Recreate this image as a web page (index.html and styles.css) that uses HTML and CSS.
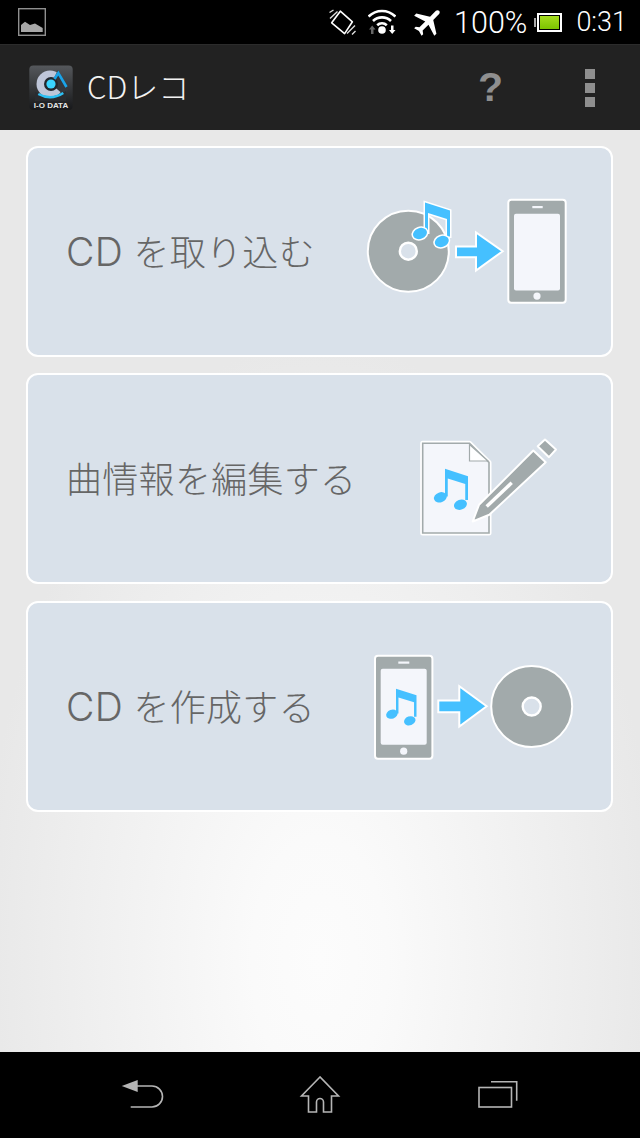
FILE: index.html
```html
<!DOCTYPE html>
<html lang="ja">
<head>
  <meta charset="UTF-8" />
  <meta name="viewport" content="width=device-width, initial-scale=1.0"/>
  <title>CDレコ</title>
  <link rel="stylesheet" href="styles.css">
</head>
<body>
  <div class="statusbar">
    <svg class="st-gallery" width="28" height="28" viewBox="18 8 28 28">
      <rect x="18.7" y="8.7" width="26.6" height="26.6" fill="none" stroke="#8f8f8f" stroke-width="1.4"/>
      <path d="M21 32V25L25 21.7L30 25L35 23.5L42.7 28V32Z" fill="#a8a8a8"/>
    </svg>
    <div class="st-right">
      <svg class="st-vibrate" width="28" height="28" viewBox="326 8 28 28">
        <path d="M338.3 11.2L350.4 21.8L342.6 33.6L329.7 22.8Z" fill="none" stroke="#fff" stroke-width="1.6" stroke-linejoin="round"/>
        <path d="M327.5 12.5L331.5 10M328 18.5L335.5 11.5M345 33.5L353 25.5M350 34.5L353.5 31" fill="none" stroke="#ddd" stroke-width="1.4"/>
      </svg>
      <svg class="st-wifi" width="28" height="28" viewBox="366 8 28 28">
        <path d="M366.6 16.6A19 19 0 0 1 393.4 16.6M371 21A13 13 0 0 1 389 21M375.2 25.2A7 7 0 0 1 384.8 25.2" fill="none" stroke="#fff" stroke-width="2.6"/>
        <circle cx="380" cy="30" r="3.8" fill="#fff"/>
        <path d="M370.2 25.5L373.5 29.5H371.5V34H369V29.5H367Z" fill="#666"/>
        <path d="M389 25.5H391.5V30H393.5L390.2 34L387 30H389Z" fill="#fff"/>
      </svg>
      <svg class="st-plane" width="36" height="36" viewBox="0 0 24 24">
        <path transform="rotate(45 12 12)" d="M21 16v-2l-8-5V3.5c0-.83-.67-1.5-1.5-1.5S10 2.67 10 3.5V9l-8 5v2l8-2.5V19l-2 1.5V22l3.5-1 3.5 1v-1.5L13 19v-5.5l8 2.5z" fill="#fff"/>
      </svg>
      <span class="st-pct">100%</span>
      <div class="st-battery"><div class="st-battery-fill"></div></div>
      <span class="st-time">0:31</span>
    </div>
  </div>

  <div class="actionbar">
    <svg class="app-icon" width="46" height="46" viewBox="0 0 46 46">
      <defs>
        <linearGradient id="iconbg" x1="0" y1="0" x2="0" y2="1">
          <stop offset="0" stop-color="#55585c"/>
          <stop offset="1" stop-color="#17181a"/>
        </linearGradient>
      </defs>
      <rect x="1.3" y="0.4" width="43.4" height="44.6" rx="4" fill="url(#iconbg)"/>
      <circle cx="22" cy="19" r="13.5" fill="#bfc6d9"/>
      <path d="M23 19L30 5L41 24L36 30Z" fill="#34373c"/>
      <path d="M7 27Q23 36 38 26V36H7Z" fill="#2a2c30"/>
      <path d="M10.3 29Q23 36 35.3 28" fill="none" stroke="#2cc0f5" stroke-width="2.4"/>
      <circle cx="23" cy="19" r="7" fill="#23272e"/>
      <circle cx="23" cy="19" r="4.6" fill="#3ad4ff"/>
      <path d="M26.5 14L30.3 8L38.5 22" fill="none" stroke="#1aa3e8" stroke-width="2.6"/>
      <text class="app-icon-text" x="23" y="43">I-O DATA</text>
    </svg>
    <span class="app-title">CDレコ</span>
    <span class="act-help">?</span>
    <div class="act-menu"><i></i><i></i><i></i></div>
  </div>

  <div class="content">
    <div class="card">
      <span class="card-label"><span class="card-latin">CD</span> を取り込む</span>
      <svg class="card-icon" width="220" height="130" viewBox="360 186.5 220 130">
        <defs>
          <g id="note">
            <path d="M0 0L25 8V34H22V16.5L3 10.5V30H0Z"/>
            <ellipse cx="-5" cy="31" rx="7.2" ry="5.4" transform="rotate(-20 -5 31)"/>
            <ellipse cx="16.8" cy="39" rx="7.2" ry="5.4" transform="rotate(-20 16.8 39)"/>
          </g>
        </defs>
        <circle class="disc" cx="408.3" cy="250.7" r="40.5"/>
        <circle class="disc-hole" cx="408.3" cy="250.7" r="8.5"/>
        <use class="note note-line" href="#note" x="425" y="202"/>
        <path class="arrow" d="M456 246H476V232L502.7 250.7L476 270V256.7H456Z"/>
        <rect class="phone" x="508.3" y="199.3" width="57.4" height="103" rx="3"/>
        <rect class="phone-screen" x="514" y="213.3" width="46" height="76.7" rx="2"/>
        <rect class="phone-part" x="532.3" y="205.5" width="10.4" height="2.2"/>
        <circle class="phone-part" cx="537" cy="295.6" r="3.6"/>
      </svg>
    </div>

    <div class="card">
      <span class="card-label">曲情報を編集する</span>
      <svg class="card-icon" width="220" height="130" viewBox="360 413.5 220 130">
        <path class="doc-edge" d="M422.7 442.7H469.5L489 462V532.5H422.7Z"/>
        <path class="doc" d="M422.7 442.7H469.5L489 462V532.5H422.7Z"/>
        <path class="doc-fold" d="M469.5 444V460.5H488Z"/>
        <use class="note" href="#note" transform="translate(445 468.3) scale(.92)"/>
        <path class="pencil" d="M472.7 521L479 504.3L533.3 450L545.7 461.7L489.3 514.3Z"/>
        <path class="pencil" d="M537.7 445.7L545 439L556 449L549 456.7Z"/>
        <path class="pencil-slot" d="M486.7 506L511.7 482.3"/>
      </svg>
    </div>

    <div class="card card-last">
      <span class="card-label"><span class="card-latin">CD</span> を作成する</span>
      <svg class="card-icon" width="220" height="130" viewBox="360 641.5 220 130">
        <rect class="phone" x="375" y="655.3" width="57.4" height="103" rx="3"/>
        <rect class="phone-screen" x="380.7" y="668.3" width="46" height="76" rx="2"/>
        <rect class="phone-part" x="398.3" y="661" width="11" height="2.2"/>
        <circle class="phone-part" cx="403.7" cy="750.7" r="3.6"/>
        <use class="note" href="#note" transform="translate(396 688.3) scale(.82)"/>
        <path class="arrow" d="M438.3 700H459.3V685.7L486.7 705.7L459.3 726V711.7H438.3Z"/>
        <circle class="disc" cx="531.7" cy="706" r="40.5"/>
        <circle class="disc-hole" cx="531.7" cy="706" r="9"/>
      </svg>
    </div>
  </div>

  <div class="navbar">
    <div class="nav-item">
      <svg width="46" height="40" viewBox="120 1080 46 40">
        <path class="nav-line" d="M138 1091H153A10.5 10.5 0 0 1 153 1112H131.7"/>
        <path class="nav-fill" d="M122.7 1091L138.7 1085V1097Z"/>
      </svg>
    </div>
    <div class="nav-item">
      <svg width="46" height="42" viewBox="297 1074 46 42">
        <path class="nav-line" d="M320 1077L301.5 1096H308.5V1112H316.5V1102A3.5 3.5 0 0 1 323.5 1102V1112H331.5V1096H338.5Z"/>
      </svg>
    </div>
    <div class="nav-item">
      <svg width="46" height="40" viewBox="475 1080 46 40">
        <rect class="nav-line" x="479" y="1092.5" width="32.5" height="19.5"/>
        <path class="nav-line" d="M491 1086.7H516.7V1105.7"/>
      </svg>
    </div>
  </div>
</body>
</html>
```

FILE: styles.css
```css
html, body { margin: 0; height: 100%; }
body { width: 640px; height: 1138px; display: flex; flex-direction: column; overflow: hidden; background: #000; font-family: "Roboto", "Noto Sans CJK JP", sans-serif; }
svg { display: block; }

.statusbar { height: 44px; background: #000; display: flex; align-items: center; justify-content: space-between; padding: 0 13px 0 18px; box-sizing: border-box; color: #fff; }
.st-right { display: flex; align-items: center; }
.st-wifi { margin-left: 12px; }
.st-plane { margin-left: 15px; }
.st-pct { margin-left: 7px; font-size: 30.5px; font-weight: 300; }
.st-battery { position: relative; margin-left: 10px; width: 25px; height: 19px; box-sizing: border-box; border: 2px solid #fff; padding: 1px; }
.st-battery::before { content: ""; position: absolute; left: -5px; top: 3px; width: 2px; height: 9px; background: #aaa; }
.st-battery-fill { height: 100%; background: linear-gradient(#a5dc1e, #7cc300); }
.st-time { margin-left: 14px; font-size: 27px; font-weight: 300; }

.actionbar { height: 86px; background: #222; display: flex; align-items: center; padding: 0 45px 0 28px; box-sizing: border-box; color: #f2f2f2; border-top: 1px solid #2c2c2c; }
.app-icon-text { font: bold 8px "Liberation Sans", sans-serif; fill: #e6e6e6; text-anchor: middle; }
.app-title { margin: 0 0 5px 13px; font: 300 31px "Noto Sans CJK JP", sans-serif; }
.act-help { margin-left: auto; font: bold 41px "Liberation Sans", sans-serif; color: #8f8f8f; }
.act-menu { margin-left: 82px; display: flex; flex-direction: column; gap: 4px; }
.act-menu i { display: block; width: 10px; height: 10px; background: #8f8f8f; }

.content { flex: 1; display: flex; flex-direction: column; gap: 16px; padding: 16px 27px 0 26px; background: radial-gradient(ellipse 340px 620px at 50% 830px, #fcfcfc 0, #fafafa 20%, #e8e8e8 100%); }
.card { height: 211px; box-sizing: border-box; display: flex; align-items: center; justify-content: space-between; padding: 0 31px 0 38px; background: #d9e1ea; border: 2px solid #fff; border-radius: 12px; }
.card-last { margin-top: 1px; }
.card-label { margin-bottom: 4px; font-family: "Inter", "Noto Sans CJK JP", sans-serif; font-size: 36px; font-weight: 300; letter-spacing: .3px; color: #666; white-space: nowrap; }
.card-latin { font-size: 39px; }
.card-icon { flex: none; }

.disc { fill: #a2aaab; stroke: #fff; stroke-width: 2; }
.disc-hole { fill: #d9e1ea; stroke: #fff; stroke-width: 2.4; }
.note { fill: #45c0ff; }
.note-line { stroke: #fff; stroke-width: 3; paint-order: stroke; }
.arrow { fill: #45c0ff; stroke: #fff; stroke-width: 2; }
.phone { fill: #a2aaab; stroke: #fff; stroke-width: 2; }
.phone-screen { fill: #f4f6fb; }
.phone-part { fill: #f4f6fb; }
.doc-edge { fill: none; stroke: #fff; stroke-width: 5; stroke-linejoin: round; }
.doc { fill: #f4f6fb; stroke: #a2aaab; stroke-width: 1.6; }
.doc-fold { fill: #fff; stroke: #a2aaab; stroke-width: 1.2; }
.pencil { fill: #a2aaab; stroke: #fff; stroke-width: 2; stroke-linejoin: round; }
.pencil-slot { fill: none; stroke: #fff; stroke-width: 3.4; }

.navbar { height: 86px; background: #000; display: flex; justify-content: center; align-items: center; }
.nav-item { width: 178px; display: flex; justify-content: center; }
.nav-line { fill: none; stroke: #b5b5b5; stroke-width: 1.6; }
.nav-fill { fill: #b5b5b5; }
```
